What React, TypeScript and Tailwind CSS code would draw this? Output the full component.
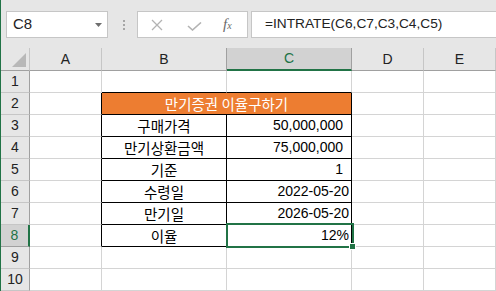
import React from 'react';

type Row = {
  n: number;
  merged?: string;
  b?: string;
  c?: string;
  pad?: boolean;
};

const rows: Row[] = [
  { n: 1 },
  { n: 2, merged: '만기증권 이율구하기' },
  { n: 3, b: '구매가격', c: '50,000,000', pad: true },
  { n: 4, b: '만기상환금액', c: '75,000,000', pad: true },
  { n: 5, b: '기준', c: '1', pad: true },
  { n: 6, b: '수령일', c: '2022-05-20' },
  { n: 7, b: '만기일', c: '2026-05-20' },
  { n: 8, b: '이율', c: '12%' },
  { n: 9 },
  { n: 10 },
];

const kr = "font-['Noto_Sans_CJK_KR',sans-serif] text-[14.5px]";
const num = "font-['Liberation_Sans',Arial,sans-serif] text-[14px]";

// gridline / table border helper
const cell = (rightBlack: boolean, bottomBlack: boolean) =>
  `h-[22px] border-r border-b ${rightBlack ? 'border-r-black' : 'border-r-[#d4d4d4]'} ${
    bottomBlack ? 'border-b-black' : 'border-b-[#d4d4d4]'
  }`;

export default function App() {
  return (
    <div className="relative w-[496px] h-[291px] overflow-hidden bg-white border-l border-[#217346] text-[#222]">
      {/* ===== Formula bar ===== */}
      <div className="h-[48px] bg-[#e6e6e6] flex items-start pt-[11px]">
        <div className="ml-[5px] w-[102px] h-[27px] bg-white border border-[#c6c6c6] flex items-center justify-between pl-[6px] pr-[5px]">
          <span className={`${num} text-[15px] text-[#222]`}>C8</span>
          <svg width="7" height="4" viewBox="0 0 7 4">
            <polygon points="0,0 7,0 3.5,4" fill="#6e6e6e" />
          </svg>
        </div>

        <div className="ml-[15px] mt-[9px] flex flex-col gap-[2px]">
          <div className="w-[2px] h-[2px] bg-[#a6a6a6]" />
          <div className="w-[2px] h-[2px] bg-[#a6a6a6]" />
          <div className="w-[2px] h-[2px] bg-[#a6a6a6]" />
        </div>

        <div className="ml-[12px] w-[111px] h-[27px] bg-white border border-[#c6c6c6] flex items-center pl-[13px]">
          <svg width="12" height="12" viewBox="0 0 12 12">
            <path d="M1 1 L11 11 M11 1 L1 11" stroke="#b3b3b3" strokeWidth="1.3" />
          </svg>
          <svg className="ml-[24px] mt-[3px]" width="15" height="9" viewBox="0 0 15 9">
            <path d="M1 4 L5.5 8 L14 0.5" stroke="#b3b3b3" strokeWidth="1.6" fill="none" />
          </svg>
          <span className="ml-[21px] font-['Liberation_Serif',serif] italic text-[15px] text-[#6a6a6a] leading-none">
            f<span className="text-[10px]">x</span>
          </span>
        </div>

        <div className="ml-[3px] flex-1 h-[27px] bg-white border border-[#c6c6c6] border-r-0 flex items-center pl-[13px]">
          <span className="font-['Liberation_Sans',Arial,sans-serif] text-[13.7px] text-[#222]">
            =INTRATE(C6,C7,C3,C4,C5)
          </span>
        </div>
      </div>

      {/* ===== Sheet ===== */}
      <div className="grid grid-cols-[29px_72px_125px_125px_72px_72px]">
        {/* column headers */}
        <div className="h-[23px] bg-[#e6e6e6] border-r border-b border-r-[#c6c6c6] border-b-[#a0a0a0] flex items-end justify-end pr-[3px] pb-[3px]">
          <svg width="14" height="14" viewBox="0 0 14 14">
            <polygon points="14,0 14,14 0,14" fill="#b8b8b8" />
          </svg>
        </div>
        {['A', 'B', 'C', 'D', 'E'].map((h) => (
          <div
            key={h}
            className={`h-[23px] flex items-center justify-center ${num} ${
              h === 'C'
                ? 'bg-[#d2d2d2] border-r border-b-2 border-r-[#a0a0a0] border-b-[#217346] text-[#217346]'
                : h === 'B'
                ? 'bg-[#e6e6e6] border-r border-b border-r-[#a0a0a0] border-b-[#a0a0a0] text-[#222]'
                : 'bg-[#e6e6e6] border-r border-b border-r-[#c6c6c6] border-b-[#a0a0a0] text-[#222]'
            }`}
          >
            {h}
          </div>
        ))}

        {rows.map((r) => {
          const inTable = r.n >= 2 && r.n <= 8;
          return (
            <React.Fragment key={r.n}>
              <div
                className={`h-[22px] flex items-center justify-center ${num} ${
                  r.n === 8
                    ? 'bg-[#d2d2d2] border-r-2 border-b border-r-[#217346] border-b-[#a0a0a0] text-[#217346]'
                    : 'bg-[#e6e6e6] border-r border-b border-r-[#a0a0a0] border-b-[#c6c6c6] text-[#222]'
                }`}
              >
                {r.n}
              </div>

              {/* A */}
              <div className={cell(inTable, false)} />

              {r.merged ? (
                <div
                  className={`col-span-2 ${cell(true, true)} bg-[#ed7d31] text-white flex items-center justify-center ${kr}`}
                >
                  {r.merged}
                </div>
              ) : (
                <>
                  <div
                    className={`${cell(inTable, inTable || r.n === 1)} flex items-center justify-center ${kr} text-black`}
                  >
                    {r.b}
                  </div>
                  <div
                    className={`${cell(inTable, inTable || r.n === 1)} flex items-center justify-end ${
                      r.pad ? 'pr-[8px]' : 'pr-[2px]'
                    } ${num} text-black`}
                  >
                    {r.c}
                  </div>
                </>
              )}

              <div className={cell(false, false)} />
              <div className={cell(false, false)} />
            </React.Fragment>
          );
        })}
      </div>

      {/* ===== Selection on C8 ===== */}
      <div className="absolute left-[225px] top-[223px] w-[128px] h-[25px] border-2 border-[#217346]" />
      <div className="absolute left-[348px] top-[243px] w-[7px] h-[7px] bg-[#217346] border border-white" />
    </div>
  );
}
